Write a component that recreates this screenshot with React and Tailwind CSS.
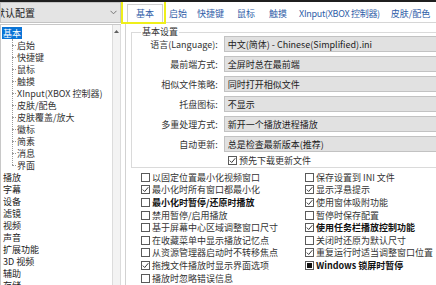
import React from 'react';

const font = { fontFamily: '"Noto Sans CJK SC", "Noto Sans", sans-serif' };

const children = ['启始', '快捷键', '鼠标', '触摸', 'XInput(XBOX 控制器)', '皮肤/配色', '皮肤覆盖/放大', '徽标', '简素', '消息', '界面'];
const topLevel = ['播放', '字幕', '设备', '滤镜', '视频', '声音', '扩展功能', '3D 视频', '辅助', '存储'];

const tabs = [
  { label: '启始', ml: 'ml-[6px]' },
  { label: '快捷键', ml: 'ml-[10px]' },
  { label: '鼠标', ml: 'ml-[13px]' },
  { label: '触摸', ml: 'ml-[14px]' },
  { label: 'XInput(XBOX 控制器)', ml: 'ml-[12px] tracking-[-0.3px]' },
  { label: '皮肤/配色', ml: 'ml-[11px]' },
];

const rows = [
  ['语言(Language):', '中文(简体) - Chinese(Simplified).ini'],
  ['最前端方式:', '全屏时总在最前端'],
  ['相似文件策略:', '同时打开相似文件'],
  ['托盘图标:', '不显示'],
  ['多重处理方式:', '新开一个播放进程播放'],
  ['自动更新:', '总是检查最新版本(推荐)'],
];

// [text, state, bold]  state: 0 off, 1 checked, 2 indeterminate
const leftChecks = [
  ['以固定位置最小化视频窗口', 0],
  ['最小化时所有窗口都最小化', 1],
  ['最小化时暂停/还原时播放', 0, true],
  ['禁用暂停/启用播放', 0],
  ['基于屏幕中心区域调整窗口尺寸', 0],
  ['在收藏菜单中显示播放记忆点', 0],
  ['从资源管理器启动时不转移焦点', 0],
  ['拖拽文件播放时显示界面选项', 1],
  ['播放时忽略错误信息', 0],
];
const rightChecks = [
  ['保存设置到 INI 文件', 0],
  ['显示浮悬提示', 1],
  ['使用窗体吸附功能', 1],
  ['暂停时保存配置', 0],
  ['使用任务栏播放控制功能', 1, true],
  ['关闭时还原为默认尺寸', 0],
  ['重复运行时适当调整窗口位置', 1],
  ['Windows 锁屏时暂停', 2, true],
];

function Box({ state }) {
  return (
    <span className="flex h-[9px] w-[9px] shrink-0 items-center justify-center border border-[#5a5a5a] bg-white">
      {state === 1 && (
        <svg width="7" height="7" viewBox="0 0 7 7">
          <polyline points="0.8,3.6 2.7,5.5 6.3,1.2" fill="none" stroke="#3a3a3a" strokeWidth="1" />
        </svg>
      )}
      {state === 2 && <span className="h-[5px] w-[5px] bg-[#111]" />}
    </span>
  );
}

function Check({ text, state, bold }) {
  return (
    <div className="flex h-[12.6px] items-center gap-[2px] whitespace-nowrap">
      <Box state={state} />
      <span className={bold ? 'font-bold text-[#111]' : 'text-[#333]'}>{text}</span>
    </div>
  );
}

export default function App() {
  return (
    <div className="flex h-[285px] w-[436px] flex-col overflow-hidden bg-white text-[9px] leading-none" style={font}>
      <div className="h-[2px] shrink-0 bg-[#1f1f1f]" />
      <div className="flex flex-1 overflow-hidden">
        {/* left: profile dropdown + tree */}
        <div className="flex w-[121px] shrink-0 flex-col">
          <div className="flex h-[21px] shrink-0 items-center justify-between overflow-hidden border border-[#c4c4c4] bg-[#e4e4e4] pr-[3px]">
            <span className="-ml-[6px] text-[10px] text-[#222]">默认配置</span>
            <svg width="7" height="5" viewBox="0 0 7 5">
              <polyline points="0.5,0.8 3.5,3.8 6.5,0.8" fill="none" stroke="#777" strokeWidth="1" />
            </svg>
          </div>
          <div className="mt-[1px] flex flex-1 border-l border-t border-[#c8c8c8]">
            <div className="flex-1 pt-[2px]">
              <div className="flex h-[12px] items-center">
                <span className="ml-[1px] flex h-[12px] items-center bg-[#0a74d6] px-[1px] text-white">基本</span>
              </div>
              <div className="relative">
                <div className="absolute left-[11px] top-0 h-[126px] border-l border-dotted border-[#9a9a9a]" />
                {children.map((c) => (
                  <div key={c} className="flex h-[12px] items-center whitespace-nowrap">
                    <span className="ml-[11px] w-[4px] border-t border-dotted border-[#9a9a9a]" />
                    <span className="ml-[1px] text-[#333]">{c}</span>
                  </div>
                ))}
              </div>
              {topLevel.map((t) => (
                <div key={t} className="flex h-[12px] items-center pl-[2px] text-[#222]">{t}</div>
              ))}
            </div>
            <div className="flex w-[9px] shrink-0 flex-col items-center border-x border-[#dcdcdc] bg-[#f3f3f3]">
              <svg className="mt-[5px]" width="5" height="3" viewBox="0 0 5 3">
                <polygon points="0,3 2.5,0 5,3" fill="#606060" />
              </svg>
            </div>
          </div>
        </div>

        {/* right: tabs + page */}
        <div className="ml-[4px] flex w-[330px] shrink-0 flex-col">
          <div className="flex h-[21px] shrink-0 items-end whitespace-nowrap border-b border-[#d6d6d6] text-[#2f5ea8]">
            <div className="relative ml-[2px] flex h-[18px] items-center border-x border-t border-[#cfcfcf] bg-white px-[8px]">
              <span>基本</span>
              <div className="absolute -left-[7px] -right-[4px] -top-[5px] -bottom-[2px] border-2 border-[#efef1a]" />
            </div>
            {tabs.map((t) => (
              <div key={t.label} className={`flex h-[18px] items-center ${t.ml}`}>{t.label}</div>
            ))}
          </div>
          <div className="flex flex-1 flex-col border-l border-[#d2d2d2] bg-white">
            {/* group box */}
            <div className="relative ml-[5px] mt-[9px] border-l border-t border-b border-[#dadada] pb-[1px] pt-[3px]">
              <span className="absolute -top-[6px] left-[9px] bg-white px-[1px] text-[#333]">基本设置</span>
              <div className="flex flex-col gap-[4px]">
                {rows.map(([l, v]) => (
                  <div key={l} className="flex h-[16px] items-center">
                    <span className="w-[89px] text-right text-[#333]">{l}</span>
                    <div className="ml-[6px] flex h-[16px] w-[240px] items-center border border-[#c2c2c2] bg-[#e1e1e1] pl-[3px] text-[#222]">{v}</div>
                  </div>
                ))}
              </div>
              <div className="ml-[96px] mt-[2px] flex h-[12px] items-center gap-[2px]">
                <Box state={1} />
                <span className="text-[#333]">预先下载更新文件</span>
              </div>
            </div>
            {/* check grid */}
            <div className="ml-[15px] mt-[3px] flex">
              <div className="w-[164px] shrink-0">
                {leftChecks.map(([t, s, b]) => <Check key={t} text={t} state={s} bold={b} />)}
              </div>
              <div className="shrink-0">
                {rightChecks.map(([t, s, b]) => <Check key={t} text={t} state={s} bold={b} />)}
              </div>
            </div>
          </div>
        </div>
      </div>
    </div>
  );
}
